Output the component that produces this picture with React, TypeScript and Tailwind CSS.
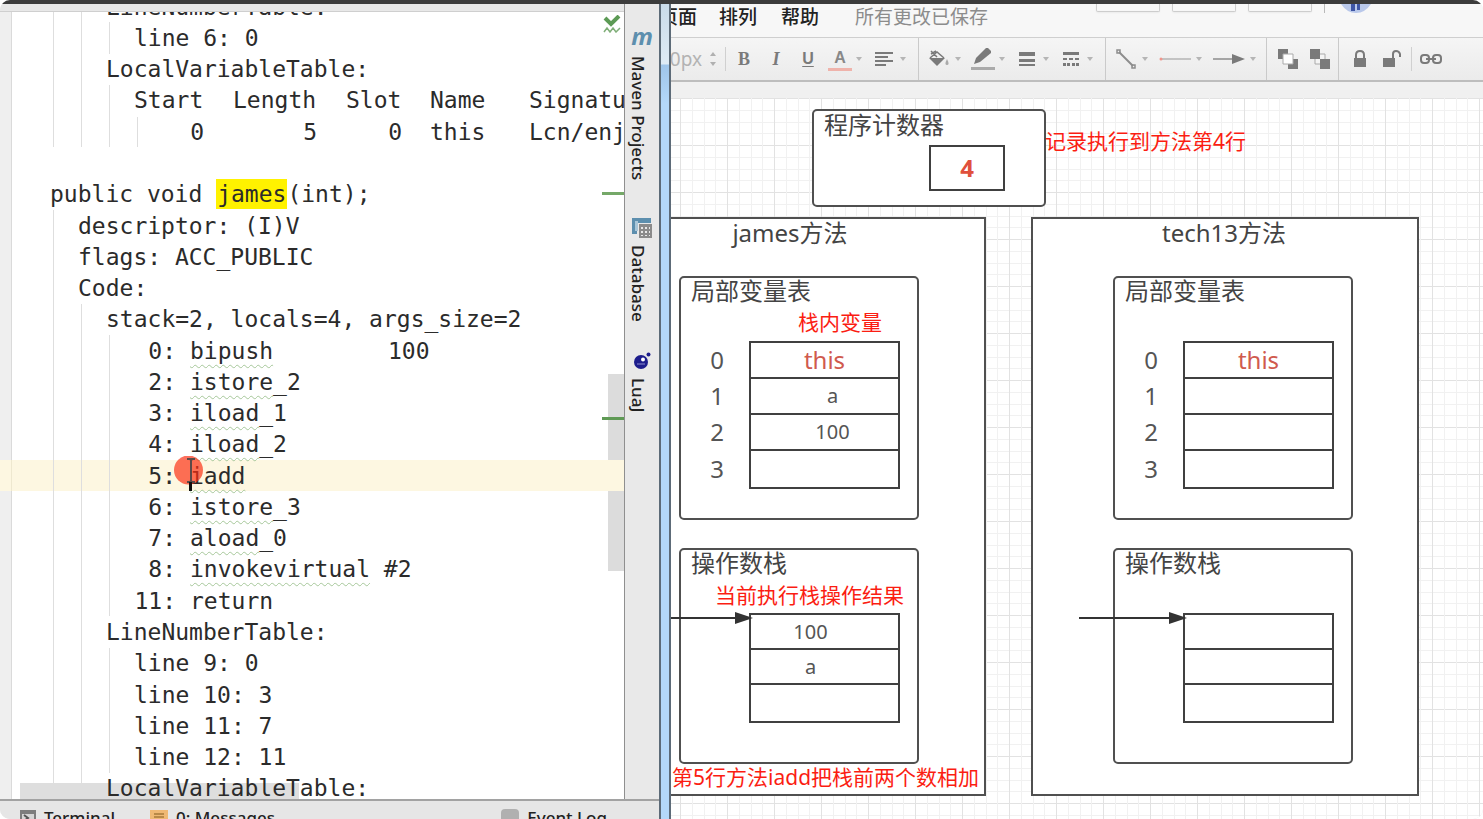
import React from 'react';

type Line = {
  level: number;
  text?: string;
  num?: string;
  op?: string;
  rest?: string;
  arg?: string;
  cols?: string[];
  numeric?: boolean;
  method?: boolean;
  blank?: boolean;
  active?: boolean;
};

const lines: Line[] = [
  { level: 2, text: 'LineNumberTable:' },
  { level: 3, text: 'line 6: 0' },
  { level: 2, text: 'LocalVariableTable:' },
  { level: 3, cols: ['Start', 'Length', 'Slot', 'Name', 'Signature'] },
  { level: 3, cols: ['0', '5', '0', 'this', 'Lcn/enjoy'], numeric: true },
  { level: 0, blank: true },
  { level: 0, method: true },
  { level: 1, text: 'descriptor: (I)V' },
  { level: 1, text: 'flags: ACC_PUBLIC' },
  { level: 1, text: 'Code:' },
  { level: 2, text: 'stack=2, locals=4, args_size=2' },
  { level: 3, num: '0:', op: 'bipush', arg: '100' },
  { level: 3, num: '2:', op: 'istore', rest: '_2' },
  { level: 3, num: '3:', op: 'iload', rest: '_1' },
  { level: 3, num: '4:', op: 'iload', rest: '_2' },
  { level: 3, num: '5:', op: 'iadd', active: true },
  { level: 3, num: '6:', op: 'istore', rest: '_3' },
  { level: 3, num: '7:', op: 'aload', rest: '_0' },
  { level: 3, num: '8:', op: 'invokevirtual', rest: ' #2' },
  { level: 3, num: '11:', text: 'return' },
  { level: 2, text: 'LineNumberTable:' },
  { level: 3, text: 'line 9: 0' },
  { level: 3, text: 'line 10: 3' },
  { level: 3, text: 'line 11: 7' },
  { level: 3, text: 'line 12: 11' },
  { level: 2, text: 'LocalVariableTable:' },
];

function Caret() {
  return (
    <svg className="w-[6px] h-[4px] shrink-0" viewBox="0 0 6 4" fill="#b5b5b5">
      <path d="M0 0h6L3 4z" />
    </svg>
  );
}

function Tool({ label, children }: { label: string; children: React.ReactNode }) {
  return (
    <button aria-label={label} className="w-8 h-full shrink-0 flex items-center justify-center">
      {children}
    </button>
  );
}

function DropTool({ label, wide, children }: { label: string; wide?: boolean; children: React.ReactNode }) {
  return (
    <button aria-label={label} className="h-full shrink-0 flex items-center pr-[6px]">
      <span className={wide ? 'w-[42px] flex justify-center' : 'w-8 flex justify-center'}>{children}</span>
      <Caret />
    </button>
  );
}

function CodeLine({ line }: { line: Line }) {
  return (
    <div className={line.active ? 'flex min-h-0 bg-[#fdf7e1]' : 'flex min-h-0'}>
      <span className={line.active ? 'w-3 shrink-0 border-r border-[#eee8cf]' : 'w-3 shrink-0 bg-[#efefef] border-r border-[#dadada]'} />
      <span className="w-[38px] shrink-0" />
      {Array.from({ length: line.level }).map((_, i) => (
        <span key={i} className="w-7 pl-[3px] shrink-0">
          <span className="block h-full border-l border-[#dedede]" />
        </span>
      ))}
      <span className="flex items-center relative">
        {line.method && (
          <>
            public void&nbsp;<span className="bg-[#fff200] px-px">james</span>(int);
          </>
        )}
        {line.cols && (
          <span className="grid grid-cols-[99px_113px_84px_99px_120px]">
            {line.cols.map((col, i) => (
              <span
                key={i}
                className={
                  !line.numeric || i > 2
                    ? ''
                    : i === 0
                      ? 'ml-[3px] w-[67px] text-right border-l border-[#dedede]'
                      : i === 1
                        ? 'w-[84px] text-right'
                        : 'w-14 text-right'
                }
              >
                {col}
              </span>
            ))}
          </span>
        )}
        {line.num && <span className="w-[42px] text-right mr-[14px]">{line.num}</span>}
        {line.op && (
          <span className={line.arg ? 'w-[198px]' : ''}>
            <span className="underline decoration-wavy decoration-1 decoration-[#a6c79a] underline-offset-[5px] [text-decoration-skip-ink:none]">{line.op}</span>
            {line.rest}
          </span>
        )}
        {line.arg}
        {line.text}
        {line.active && (
          <svg className="absolute left-[40px] -top-1 w-8 h-9" viewBox="0 0 32 36" fill="none">
            <circle cx="14.500" cy="14" r="14.500" fill="#fb2c10" fillOpacity="0.680" />
            <path d="M13 3h3l1 1 1-1h3M17 4v22M13 26h3l1-1 1 1h3" stroke="#5b4a48" strokeWidth="2" />
            <path d="M16.500 26v9" stroke="#111" strokeWidth="3" />
          </svg>
        )}
      </span>
    </div>
  );
}

function Editor() {
  return (
    <div className="relative flex-1 min-w-0 flex flex-col overflow-hidden bg-white whitespace-pre font-['DejaVu_Sans_Mono',monospace] text-[23px] leading-[30px] text-[#2b2b2b]">
      <div className="absolute left-5 bottom-0 w-[279px] h-4 bg-[#dedede]" />
      <div className="absolute right-0 top-[46%] w-4 h-[25%] bg-[#dcdcdc]" />
      <div className="relative flex-1 -mt-[21px] -mb-[5px] grid auto-rows-fr min-h-0">
        {lines.map((line, i) => (
          <CodeLine key={i} line={line} />
        ))}
      </div>
      <div className="absolute right-0 top-[180px] w-[22px] h-[3px] bg-[#75a868]" />
      <div className="absolute right-0 top-[405px] w-[22px] h-[3px] bg-[#5f9a55]" />
      <svg className="absolute right-[3px] top-[3px] w-[18px] h-[18px]" viewBox="0 0 18 18" fill="none">
        <path d="M2 3l6 6 8-8" stroke="#5c9a55" strokeWidth="4" />
        <path d="M1 17l3-4 3 4 3-4 3 4 4-4" stroke="#7fae78" strokeWidth="1.500" />
      </svg>
    </div>
  );
}

function Sidebar() {
  return (
    <div className="w-[35px] shrink-0 bg-[#e9e9e9] border-l border-[#8f8f8f] text-[17px] leading-5 font-medium text-[#222] overflow-hidden">
      <button className="flex flex-col items-center w-full pt-2 h-[213px]">
        <span className="h-11 text-2xl leading-[48px] font-bold italic text-[#5d8fae]">m</span>
        <span className="[writing-mode:vertical-rl] w-5 mr-2">Maven Projects</span>
      </button>
      <button className="flex flex-col items-center w-full h-[135px]">
        <svg className="w-[22px] h-[22px] mb-[6px] shrink-0" viewBox="0 0 22 22">
          <path d="M1 1h19v5H6v11H1z" fill="#5d8fae" />
          <path d="M4 4h3v10H4z" fill="#a9c6d8" />
          <path d="M8 7h13v14H8z" fill="#8b8b8b" />
          <path d="M10 10h2v2h-2zM14 10h2v2h-2zM18 10h1v2h-1zM10 14h2v2h-2zM14 14h2v2h-2zM18 14h1v2h-1zM10 18h2v1h-2zM14 18h2v1h-2zM18 18h1v1h-1z" fill="#e8e8e8" />
        </svg>
        <span className="[writing-mode:vertical-rl] w-5 mr-2">Database</span>
      </button>
      <button className="flex flex-col items-center w-full">
        <svg className="w-[18px] h-[18px] mb-2 shrink-0" viewBox="0 0 18 18">
          <circle cx="8" cy="10" r="7" fill="#1d1d8c" />
          <circle cx="15.500" cy="2.500" r="2" fill="#1d1d8c" />
          <circle cx="10" cy="7.500" r="2" fill="#fff" />
          <path d="M4 12h8" stroke="#8f8fd0" />
        </svg>
        <span className="[writing-mode:vertical-rl] w-5 mr-2">LuaJ</span>
      </button>
    </div>
  );
}

function StatusBar() {
  return (
    <div className="h-5 shrink-0 border-t-2 border-[#a2a2a2] bg-[#e6e6e6] flex items-start px-5 pt-[9px] overflow-hidden text-[17px] leading-5 font-medium text-[#222]">
      <button className="flex w-[130px]">
        <svg className="w-4 h-4 mr-2 shrink-0" viewBox="0 0 16 16">
          <path d="M0 0h16v16H0z" fill="#7d7d7d" />
          <path d="M2 4h12v10H2z" fill="#d5d5d5" />
          <path d="M4 5l4 3-4 3" stroke="#555" strokeWidth="2" fill="none" />
        </svg>
        <span className="-mt-[2px]">Terminal</span>
      </button>
      <button className="flex">
        <svg className="w-[18px] h-4 mr-2 shrink-0" viewBox="0 0 18 16">
          <path d="M0 0h18v16H0z" fill="#efb873" />
          <path d="M4 4h10M4 7h10M4 10h10" stroke="#a8793b" strokeWidth="1.500" />
        </svg>
        <span className="-mt-[2px]">0: Messages</span>
      </button>
      <button className="flex ml-auto mr-8">
        <span className="w-[18px] h-5 -mt-px mr-2 rounded-sm bg-[#b0b0b0]" />
        <span className="-mt-[2px]">Event Log</span>
      </button>
    </div>
  );
}

function MenuBar() {
  return (
    <div className="h-[34px] shrink-0 bg-[#f7f7f7] border-b border-[#cfcfcf] flex items-start text-[19px] leading-[26px] text-[#222] overflow-hidden">
      <button className="-ml-3 mr-[22px] font-medium">页面</button>
      <button className="mr-6 font-medium">排列</button>
      <button className="mr-9 font-medium">帮助</button>
      <span className="text-[#8c8c8c]">所有更改已保存</span>
      <div className="flex ml-auto mr-[112px]">
        <span className="w-16 h-2 mr-3 rounded-b-xs border border-t-0 border-[#cdcdcd] shadow-xs" />
        <span className="w-16 h-2 mr-3 rounded-b-xs border border-t-0 border-[#cdcdcd] shadow-xs" />
        <span className="w-16 h-2 mr-3 rounded-b-xs border border-t-0 border-[#cdcdcd] shadow-xs" />
        <span className="w-px h-[9px] mr-4 bg-[#b9b9b9]" />
        <svg className="w-[30px] h-[9px]" viewBox="0 0 30 9">
          <path d="M0 0h30q-6 9-15 9T0 0z" fill="#b9c8ea" />
          <path d="M10 0h4v7h-4zM16 0h3v6h-3z" fill="#3f56a5" />
        </svg>
      </div>
    </div>
  );
}

function Toolbar() {
  return (
    <div className="h-11 shrink-0 border-b-2 border-[#bdbdbd] bg-linear-to-b from-[#f5f5f5] to-[#ebebeb] flex items-center text-[#7a7a7a] overflow-hidden">
      <div className="h-full shrink-0 flex items-center pr-[6px] border-r border-[#cacaca]">
        <input aria-label="Font size" defaultValue="20px" className="w-[46px] -ml-3 bg-transparent text-[19px] text-[#b3b3b3] outline-none" />
        <svg className="w-[6px] h-[14px] mx-[5px]" viewBox="0 0 6 14" fill="#b0b0b0">
          <path d="M0 4h6L3 0zM0 10h6l-3 4z" />
        </svg>
        <span className="w-px h-6 ml-1 mr-[2px] bg-[#d0d0d0]" />
        <Tool label="Bold">
          <span className="font-['Liberation_Serif',serif] text-lg font-bold">B</span>
        </Tool>
        <Tool label="Italic">
          <span className="font-['Liberation_Serif',serif] text-lg font-bold italic">I</span>
        </Tool>
        <Tool label="Underline">
          <span className="font-['Liberation_Sans',sans-serif] text-base font-bold underline underline-offset-2">U</span>
        </Tool>
        <DropTool label="Text colour">
          <span className="w-6 border-b-[3px] border-[#efb3ab] font-['Liberation_Sans',sans-serif] text-base leading-5 font-bold text-[#888]">A</span>
        </DropTool>
        <DropTool label="Align">
          <svg className="w-5 h-[14px]" viewBox="0 0 20 14" stroke="currentColor" strokeWidth="2">
            <path d="M1 1h18M1 5h13M1 9h18M1 13h11" />
          </svg>
        </DropTool>
      </div>
      <div className="h-full shrink-0 flex items-center pl-1 pr-[6px] border-r border-[#cacaca]">
        <DropTool label="Fill">
          <svg className="w-5 h-[18px]" viewBox="0 0 20 18" fill="currentColor">
            <path d="M0 8h16l-8 8z" />
            <path d="M1 8l7-6 7 6M2 1l6 6M2 4l5-3" fill="none" stroke="currentColor" strokeWidth="1.500" />
            <path d="M18 9q3 6 0 6t0-6z" fill="#aaa" />
          </svg>
        </DropTool>
        <DropTool label="Line colour">
          <svg className="w-6 h-[22px]" viewBox="0 0 24 22" fill="currentColor">
            <path d="M3 16l2-6L15 0h2l3 3v2L9 14z" />
            <path d="M0 19h24v3H0z" fill="#aaa" />
          </svg>
        </DropTool>
        <DropTool label="Line width">
          <svg className="w-4 h-[14px]" viewBox="0 0 16 14" fill="currentColor">
            <path d="M0 0h16v4H0zM0 7h16v3H0zM0 12h16v2H0z" />
          </svg>
        </DropTool>
        <DropTool label="Line style">
          <svg className="w-4 h-[14px]" viewBox="0 0 16 14" fill="currentColor">
            <path d="M0 0h16v3H0zM0 6h4v2H0zM6 6h4v2H6zM12 6h4v2h-4zM0 11h3v3H0zM4 11h3v3H4zM9 11h3v3H9zM13 11h3v3h-3z" />
          </svg>
        </DropTool>
      </div>
      <div className="h-full shrink-0 flex items-center pl-1 pr-1 border-r border-[#cacaca]">
        <DropTool label="Connector">
          <svg className="w-5 h-5" viewBox="0 0 20 20" stroke="#8d8d8d" fill="none" strokeWidth="1.500">
            <path d="M3 3l14 14" strokeWidth="2" />
            <path d="M1 1h3v3H1zM16 16h3v3h-3z" />
          </svg>
        </DropTool>
        <DropTool label="Line start" wide>
          <svg className="w-8 h-[6px]" viewBox="0 0 32 6">
            <path d="M1 3h31" stroke="#b5b5b5" strokeWidth="1.500" />
            <circle cx="2" cy="3" r="1.500" fill="#f0968c" />
          </svg>
        </DropTool>
        <DropTool label="Line end" wide>
          <svg className="w-8 h-[10px]" viewBox="0 0 32 10">
            <path d="M0 5h22" stroke="#8d8d8d" strokeWidth="1.500" />
            <path d="M19 0l13 5-13 5z" fill="#7a7a7a" />
          </svg>
        </DropTool>
      </div>
      <div className="h-full shrink-0 flex items-center pl-[5px] pr-[2px] border-r border-[#cacaca]">
        <Tool label="Bring to front">
          <svg className="w-5 h-5" viewBox="0 0 20 20" fill="currentColor">
            <path d="M0 0h10v10H0zM10 10h10v10H10z" />
            <path d="M5 5h10v10H5z" fill="#fff" stroke="#aaa" />
          </svg>
        </Tool>
        <Tool label="Send to back">
          <svg className="w-5 h-5" viewBox="0 0 20 20" fill="currentColor">
            <path d="M5 5h10v10H5z" fill="#f4f4f4" stroke="#aaa" />
            <path d="M0 0h10v10H0zM10 10h10v10H10z" />
          </svg>
        </Tool>
      </div>
      <div className="h-full flex items-center pl-[5px]">
        <Tool label="Lock">
          <svg className="w-3 h-[18px]" viewBox="0 0 12 18" fill="currentColor">
            <path d="M0 8h12v9H0z" />
            <path d="M2 9V5q0-4 4-4t4 4v4" fill="none" stroke="currentColor" strokeWidth="2" />
          </svg>
        </Tool>
        <Tool label="Unlock">
          <svg className="w-[18px] h-[18px]" viewBox="0 0 18 18" fill="currentColor">
            <path d="M0 8h12v9H0z" />
            <path d="M10 9V4q0-3 3-3t4 3v3" fill="none" stroke="currentColor" strokeWidth="2" />
          </svg>
        </Tool>
        <span className="w-px h-6 mx-[3px] bg-[#d0d0d0]" />
        <Tool label="Link">
          <svg className="w-[22px] h-[10px]" viewBox="0 0 22 10" fill="none" stroke="currentColor" strokeWidth="2">
            <rect x="1" y="1" width="8" height="8" rx="3" />
            <rect x="13" y="1" width="8" height="8" rx="3" />
            <path d="M6 5h10" />
          </svg>
        </Tool>
      </div>
    </div>
  );
}

function Slots({ values, indexed }: { values: string[]; indexed?: boolean }) {
  return (
    <table className="border-collapse">
      <tbody>
        {values.map((value, i) => (
          <tr key={i} className={indexed ? 'h-9 last:h-[38px]' : 'h-[35px] last:h-[38px]'}>
            <th className="w-[69px] p-0 pl-1 text-2xl leading-none font-normal text-[#555]">{indexed ? i : ''}</th>
            <td
              className={
                value === 'this'
                  ? 'w-[149px] p-0 border-2 border-[#404040] text-center leading-none text-2xl text-[#d05a4e]'
                  : indexed
                    ? 'w-[149px] p-0 border-2 border-[#404040] text-center leading-none text-xl pl-4 text-[#555]'
                    : 'w-[149px] p-0 border-2 border-[#404040] text-center leading-none text-xl pr-7 text-[#555]'
              }
            >
              {value}
            </td>
          </tr>
        ))}
      </tbody>
    </table>
  );
}

function StackFrame({ name, locals, operands }: { name: string; locals: string[]; operands: string[] }) {
  return (
    <>
      <h2 className="w-[222px] h-[57px] text-center text-2xl leading-7">{name}</h2>
      <section className="w-[240px] h-[244px] mb-7 rounded-[5px] border-2 border-[#505050]">
        <h3 className="pl-[10px] h-[63px] text-2xl leading-[26px]">局部变量表</h3>
        <Slots values={locals} indexed />
      </section>
      <section className="w-[240px] h-[216px] rounded-[5px] border-2 border-[#505050]">
        <h3 className="pl-[10px] h-[63px] text-2xl leading-[26px]">操作数栈</h3>
        <Slots values={operands} />
      </section>
    </>
  );
}

function Arrow() {
  return (
    <>
      <span className="flex-1 h-[2px] bg-[#333]" />
      <svg className="w-[18px] h-3" viewBox="0 0 18 12" fill="#333">
        <path d="M0 0l18 6-18 6z" />
      </svg>
    </>
  );
}

function Canvas() {
  return (
    <div className="relative flex-1 min-h-0 overflow-hidden text-[#444] bg-white bg-[linear-gradient(to_right,#e2e2e2_1px,transparent_1px,transparent_12px,#f1f1f1_12px,#f1f1f1_13px,transparent_13px,transparent_24px,#f1f1f1_24px,#f1f1f1_25px,transparent_25px,transparent_35px,#f1f1f1_35px,#f1f1f1_36px,transparent_36px),linear-gradient(to_bottom,#e2e2e2_1px,transparent_1px,transparent_12px,#f1f1f1_12px,#f1f1f1_13px,transparent_13px,transparent_24px,#f1f1f1_24px,#f1f1f1_25px,transparent_25px,transparent_35px,#f1f1f1_35px,#f1f1f1_36px,transparent_36px)] bg-[size:47px_47px] bg-[position:9px_0px]">
      <div className="absolute left-[141px] top-[11px] w-[234px] h-[98px] rounded-[5px] border-2 border-[#505050] bg-white">
        <h2 className="pl-[10px] text-2xl leading-7">程序计数器</h2>
        <div className="w-[76px] h-[46px] ml-[115px] mt-[6px] border-2 border-[#404040] flex items-center justify-center text-2xl font-bold text-[#e0503c]">4</div>
      </div>

      <div className="absolute -left-[2px] top-[119px] w-[317px] h-[579px] pl-[8px] border-2 border-[#505050] bg-white">
        <StackFrame name="james方法" locals={['this', 'a', '100', '']} operands={['100', 'a', '']} />
      </div>
      <div className="absolute left-[360px] top-[119px] w-[388px] h-[579px] pl-[80px] border-2 border-[#505050] bg-white">
        <StackFrame name="tech13方法" locals={['this', '', '', '']} operands={['', '', '']} />
      </div>

      <div className="absolute left-0 top-[514px] w-[82px] flex items-center">
        <Arrow />
      </div>
      <div className="absolute left-[408px] top-[514px] w-[108px] flex items-center">
        <Arrow />
      </div>

      <p className="absolute left-[374px] top-[29px] text-[21px] leading-7 text-[#fb1d12]">记录执行到方法第4行</p>
      <p className="absolute left-[127px] top-[210px] text-[21px] leading-7 text-[#fb1d12]">栈内变量</p>
      <p className="absolute left-[44px] top-[483px] text-[21px] leading-7 text-[#fb1d12]">当前执行栈操作结果</p>
      <p className="absolute left-px top-[665px] text-[21px] leading-7 text-[#fb1d12]">第5行方法iadd把栈前两个数相加</p>
    </div>
  );
}

export default function App() {
  return (
    <div className="h-screen flex flex-col overflow-hidden rounded-[10px] bg-[#e8e8e8] font-['Noto_Sans','Noto_Sans_CJK_SC',sans-serif]">
      <div className="h-1 shrink-0 bg-[#3c3c3c]" />
      <div className="flex-1 min-h-0 flex">
        <div className="w-[659px] shrink-0 flex flex-col">
          <div className="flex-1 min-h-0 flex">
            <div className="flex-1 min-w-0 flex flex-col">
              <div className="h-2 shrink-0 bg-[#e8e8e8] border-b border-[#cfcfcf]" />
              <Editor />
            </div>
            <Sidebar />
          </div>
          <StatusBar />
        </div>
        <div className="w-3 shrink-0 border-x-2 border-[#5d6b78] bg-[linear-gradient(to_bottom,#c9dbe9_0px,#dfebf5_60px,#9fc5ea_61px,#b4d8f9_100px)]" />
        <div className="flex-1 min-w-0 flex flex-col">
          <MenuBar />
          <Toolbar />
          <div className="h-4 shrink-0 bg-[#f0f0f0]" />
          <Canvas />
        </div>
      </div>
    </div>
  );
}
